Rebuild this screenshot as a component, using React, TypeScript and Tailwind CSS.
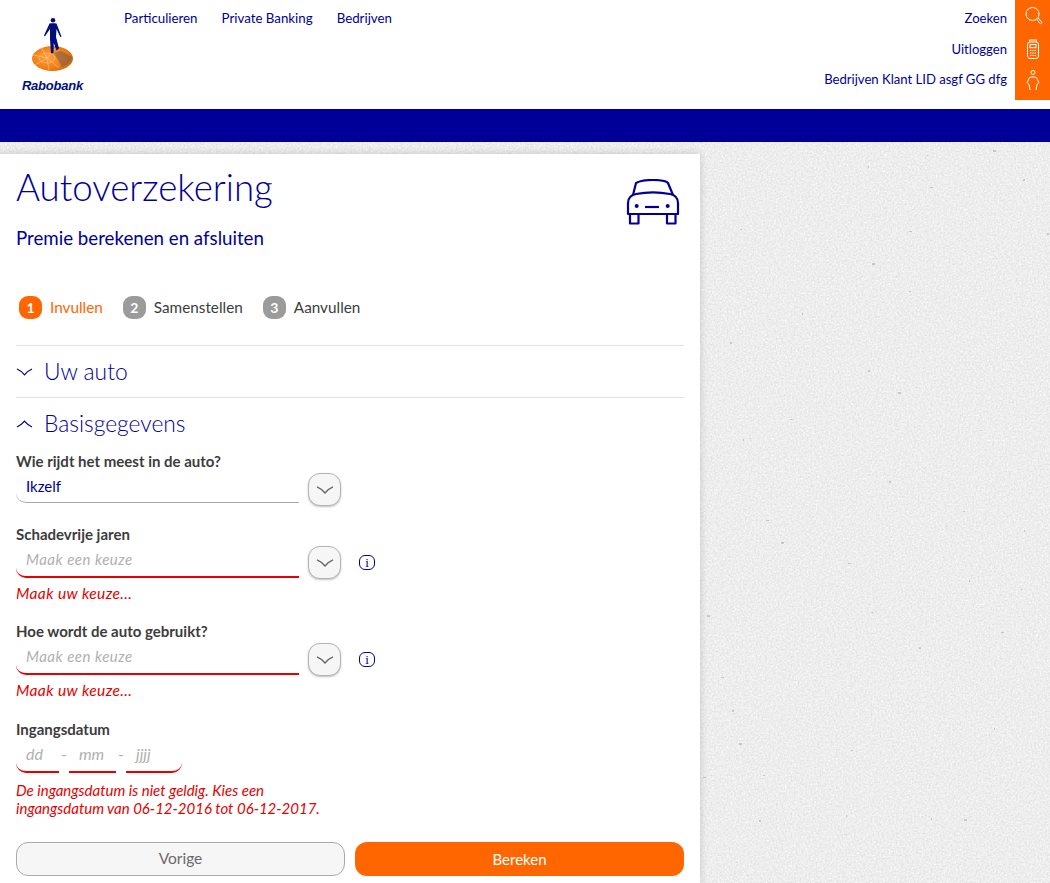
import React from 'react';

const NAVY = 'text-[#000099]';

// a few dark fibres for the paper background
const specks = Array.from({ length: 46 }, (_, i) => ({
  x: (i * 137 + (i * i * 31) % 97) % 350,
  y: (i * 211 + (i * i * 17) % 113) % 741,
  w: 1 + (i % 3),
  h: 1 + (i % 2),
}));

function PaperTexture() {
  return (
    <svg className="absolute left-0 top-[142px] w-[1050px] h-[741px]">
      <filter id="paper" colorInterpolationFilters="sRGB">
        <feTurbulence type="fractalNoise" baseFrequency="0.55" numOctaves="3" seed="4" />
        <feColorMatrix values="0.14 0 0 0 0.86  0.14 0 0 0 0.86  0.14 0 0 0 0.86  0 0 0 0 1" />
      </filter>
      <rect width="1050" height="741" filter="url(#paper)" />
      {specks.map((s, i) => (
        <rect key={i} x={700 + s.x} y={s.y} width={s.w} height={s.h} fill="#a0a0a0" opacity="0.5" />
      ))}
    </svg>
  );
}

function Chevron({ up = false, className = '' }: { up?: boolean; className?: string }) {
  return (
    <svg viewBox="0 0 18 8" className={className} fill="none" stroke="currentColor" strokeWidth="1.3">
      <path d={up ? 'M1 7.2 C4 6 7 3.5 9 1 C11 3.5 14 6 17 7.2' : 'M1 .8 C4 2 7 4.5 9 7 C11 4.5 14 2 17 .8'} />
    </svg>
  );
}

function Logo() {
  return (
    <div className="flex flex-col items-center w-[63px]">
      <svg viewBox="0 0 63 56" className="w-[63px] h-[56px]">
        <defs>
          <radialGradient id="disc" cx="0.4" cy="0.45" r="0.7">
            <stop offset="0" stopColor="#ffa040" />
            <stop offset="0.65" stopColor="#f07c14" />
            <stop offset="1" stopColor="#b8620f" />
          </radialGradient>
        </defs>
        <ellipse cx="31.5" cy="43.5" rx="20.5" ry="12.5" fill="url(#disc)" />
        <path d="M26 43 L20 32 M26 43 L36 32 M26 43 L14 50 M26 43 L38 53 M26 43 L12 40 M26 43 L28 55" stroke="#ffd9a8" strokeWidth="0.6" opacity="0.8" />
        <ellipse cx="26" cy="43" rx="8" ry="5" fill="none" stroke="#ffd9a8" strokeWidth="0.5" opacity="0.7" />
        <path d="M33 38 L40 36 L51 42 C51 47 46 50 41 52 Z" fill="#6e5a50" opacity="0.55" />
        <circle cx="32" cy="5.2" r="2.3" fill="#000f7a" />
        <path d="M28.5 8.5 C30.5 8 33.5 8 35.5 8.5 L40.5 21.5 L39.3 22 L35.5 14 L35 22 L38 33.5 L35.5 35.5 L32.8 28 L32.5 38 L30 38.5 L29 24 L29 14 L23.8 21.5 L23 20.5 Z" fill="#000f7a" />
      </svg>
      <span className="font-['Liberation_Sans',sans-serif] font-bold italic text-[13px] leading-[13px] tracking-[-0.2px] text-[#000f7a] mt-[8px]">Rabobank</span>
    </div>
  );
}

function Field({ label, value, placeholder, error, info }: { label: string; value?: string; placeholder?: string; error?: string; info?: boolean }) {
  return (
    <div>
      <div className="text-[15px] leading-5 font-bold text-[#3c3c3c]">{label}</div>
      <div className="flex items-start mt-[1px]">
        <div className={`w-[283px] pl-[10px] pt-[4px] text-[15px] leading-5 rounded-bl-[10px] ${error ? 'h-[33px] border-b-2 border-[#e60000]' : 'h-[31px] border-b border-[#a8a8a8]'} ${value ? NAVY : 'italic tracking-[0.5px] text-[#b0b0b0]'}`}>
          {value || placeholder}
        </div>
        <div className="ml-[9px] mt-[1px] w-[33px] h-[33px] rounded-[12px] border border-[#b4b4b4] bg-[#f6f6f6] shadow-[0_1px_2px_rgba(0,0,0,0.25)] flex items-center justify-center text-[#666666]">
          <Chevron className="w-[18px] h-[8px]" />
        </div>
        {info && (
          <div className={`ml-[18px] mt-[10px] w-[16px] h-[15px] rounded-[6px] border-[1.5px] border-[#000099] flex items-center justify-center font-['Liberation_Serif',serif] text-[13px] leading-none ${NAVY}`}>i</div>
        )}
      </div>
      {error && <div className="mt-[4px] text-[15.5px] tracking-[0.4px] leading-5 italic text-[#e60000]">{error}</div>}
    </div>
  );
}

function Step({ n, label, active }: { n: number; label: string; active?: boolean }) {
  return (
    <div className="flex items-center">
      <span className={`w-[23px] h-[23px] rounded-[9px] flex items-center justify-center text-white text-[14px] font-bold ${active ? 'bg-[#ff6600]' : 'bg-[#9b9b9b]'}`}>{n}</span>
      <span className={`ml-[8px] text-[15.3px] ${active ? 'text-[#ff6600]' : 'text-[#3c3c3c]'}`}>{label}</span>
    </div>
  );
}

export default function App() {
  return (
    <div className="relative h-[883px] overflow-hidden bg-[#ececec] font-['Lato','Noto_Sans',sans-serif]">
      <PaperTexture />
      <header className="relative h-[109px] bg-white flex">
        <div className="pl-[21px] pt-[15px] w-[124px]"><Logo /></div>
        <nav className={`flex gap-[24px] pt-[10px] text-[13.3px] leading-4 h-fit ${NAVY}`}>
          <a>Particulieren</a>
          <a>Private Banking</a>
          <a>Bedrijven</a>
        </nav>
        <div className={`ml-auto flex flex-col items-end pt-[10px] gap-[14.5px] text-[13.1px] leading-4 ${NAVY}`}>
          <a>Zoeken</a>
          <a>Uitloggen</a>
          <a>Bedrijven Klant LID asgf GG dfg</a>
        </div>
        <div className="ml-[8px] w-[35px] h-[100px] bg-[#ff6600] flex flex-col items-center text-white pt-[6px]">
          <svg viewBox="0 0 20 20" className="w-[20px] h-[20px]" fill="none" stroke="currentColor" strokeWidth="1">
            <circle cx="9.5" cy="8" r="6.5" />
            <path d="M13.6 13.2 L17.4 17.8 L19 16.4 L15 11.8" strokeLinejoin="round" />
          </svg>
          <svg viewBox="0 0 12 20" className="w-[12px] h-[20px] mt-[13px]" fill="none" stroke="currentColor" strokeWidth="1">
            <rect x="0.5" y="3" width="11" height="16.5" rx="2.5" />
            <path d="M2.5 3 L2.5 1 L9.5 1 L9.5 3" />
            <rect x="3" y="5.5" width="6" height="3.2" />
            <path d="M3 11.5h1.4M5.3 11.5h1.4M7.6 11.5h1.4M3 14h1.4M5.3 14h1.4M7.6 14h1.4M3 16.5h1.4M5.3 16.5h1.4M7.6 16.5h1.4" />
          </svg>
          <svg viewBox="0 0 14 20" className="w-[14px] h-[20px] mt-[11px]" fill="none" stroke="currentColor" strokeWidth="1">
            <circle cx="7" cy="2.5" r="2" />
            <path d="M3.5 7.5 C5.5 6.8 8.5 6.8 10.5 7.5 C11.2 9 12 11 12.8 12.5 L10.8 15 L10 20 M3.5 7.5 C2.8 9 2 11 1.2 12.5 L3.2 15 L4 20" />
          </svg>
        </div>
      </header>
      <div className="relative h-[33px] bg-[#000099]" />
      <main className="relative mt-[12px] w-[700px] h-[729px] bg-white shadow-[0_0_8px_rgba(0,0,0,0.18)] px-[16px]">
        <div className="flex justify-between">
          <div>
            <h1 className={`pt-[10px] text-[36.7px] leading-[46px] font-light ${NAVY}`}>Autoverzekering</h1>
            <p className={`mt-[16px] text-[18.7px] leading-6 ${NAVY}`}>Premie berekenen en afsluiten</p>
          </div>
          <svg viewBox="0 0 54 46" className={`w-[54px] h-[46px] mt-[25px] mr-[4px] ${NAVY}`} fill="none" stroke="currentColor" strokeWidth="2.2" strokeLinejoin="round">
            <path d="M7 16 L10 4 C14 1.8 21 1 27 1 C33 1 40 1.8 42 4 L47 16" />
            <path d="M2 35 L2 24 C2 19 5 16 10 15 C20 13 34 13 44 15 C49 16 52 19 52 24 L52 35 Z" />
            <path d="M4 35 V44.5 H12.5 V35 M41 35 V44.5 H49.5 V35" />
            <circle cx="10.7" cy="27" r="2" fill="currentColor" stroke="none" />
            <circle cx="41.7" cy="27" r="2" fill="currentColor" stroke="none" />
            <path d="M19 28 H33" />
          </svg>
        </div>
        <div className="flex gap-[20px] mt-[45px] pl-[3px] h-[24px]">
          <Step n={1} label="Invullen" active />
          <Step n={2} label="Samenstellen" />
          <Step n={3} label="Aanvullen" />
        </div>
        <div className={`mt-[26px] border-t border-[#e2e2e2] h-[52px] flex items-center text-[22.8px] font-light ${NAVY}`}>
          <Chevron className="w-[17px] h-[8px] mr-[11px]" />
          Uw auto
        </div>
        <div className={`border-t border-[#e2e2e2] h-[52px] flex items-center text-[22.8px] font-light ${NAVY}`}>
          <Chevron up className="w-[17px] h-[8px] mr-[11px]" />
          Basisgegevens
        </div>
        <div className="mt-[2px]"><Field label="Wie rijdt het meest in de auto?" value="Ikzelf" /></div>
        <div className="mt-[18px]"><Field label="Schadevrije jaren" placeholder="Maak een keuze" error="Maak uw keuze…" info /></div>
        <div className="mt-[18px]"><Field label="Hoe wordt de auto gebruikt?" placeholder="Maak een keuze" error="Maak uw keuze…" info /></div>
        <div className="mt-[19px]">
          <div className="text-[15px] leading-5 font-bold text-[#3c3c3c]">Ingangsdatum</div>
          <div className="flex mt-[1px] text-[16px] italic text-[#b0b0b0] leading-5 h-[33px]">
            <div className="w-[43px] pl-[10px] pt-[4px] border-b-2 border-[#e60000] rounded-bl-[10px]">dd</div>
            <div className="w-[10px] text-center pt-[4px] not-italic">-</div>
            <div className="w-[47px] pl-[10px] pt-[4px] border-b-2 border-[#e60000]">mm</div>
            <div className="w-[10px] text-center pt-[4px] not-italic">-</div>
            <div className="w-[56px] pl-[10px] pt-[4px] border-b-2 border-[#e60000] rounded-br-[10px]">jjjj</div>
          </div>
          <div className="mt-[8px] text-[15px] leading-[18px] italic text-[#e60000]">
            De ingangsdatum is niet geldig. Kies een<br />ingangsdatum van 06-12-2016 tot 06-12-2017.
          </div>
        </div>
        <div className="flex gap-[10px] mt-[25px]">
          <button className="w-[329px] h-[34px] rounded-[12px] border border-[#aaaaaa] bg-[#f6f6f6] text-[15.5px] text-[#6a6a6a]">Vorige</button>
          <button className="w-[329px] h-[34px] rounded-[12px] bg-[#ff6600] text-[15px] text-white">Bereken</button>
        </div>
      </main>
    </div>
  );
}
